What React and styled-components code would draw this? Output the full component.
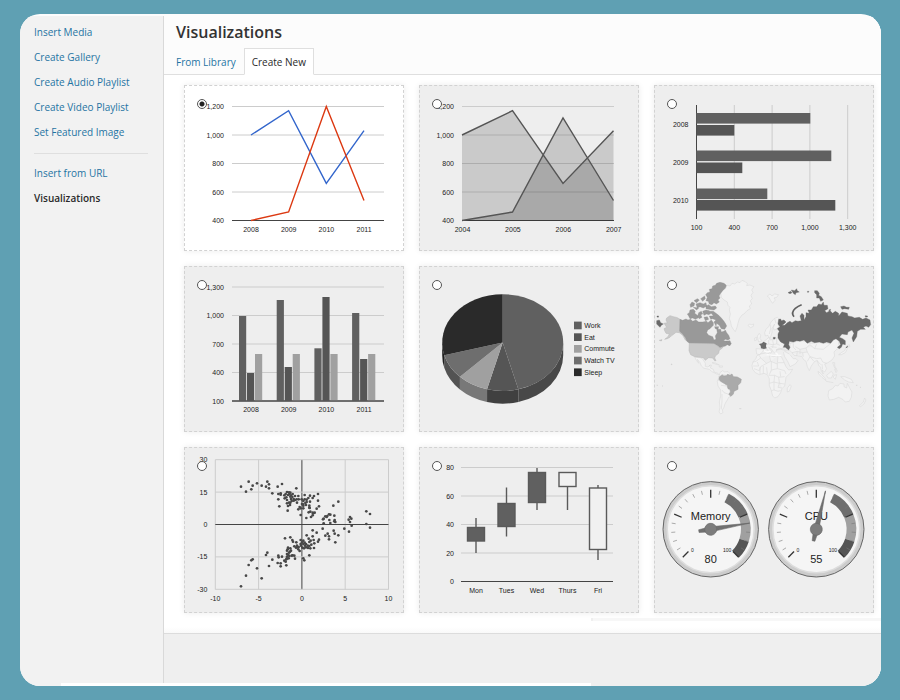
import React, { useState } from "react";
import styled, { createGlobalStyle } from "styled-components";

const Global = createGlobalStyle`
  *, *::before, *::after { box-sizing: border-box; }
  html { background: #5fa0b3; }
  body { margin: 0; font-family: "Open Sans", "Noto Sans", sans-serif; font-size: 10px; color: #333; }
  ul { list-style: none; margin: 0; padding: 0; }
`;

const Page = styled.div`
  min-height: 100vh;
  padding: 14px 19px 14px 20px;
  display: flex;
`;

const Frame = styled.div`
  flex: 1;
  min-width: 0;
  display: flex;
  flex-direction: column;
  padding-top: 2px;
  background: #fcfcfc;
  border-radius: 20px;
  overflow: hidden;
`;

const Columns = styled.div`
  flex: 1;
  display: flex;
`;

const BottomEdge = styled.div`
  height: 3px;
  background: linear-gradient(to right, #f2f2f2 41px, #fff 41px, #fff calc(100% - 290px), #efefef calc(100% - 290px));
`;

const Sidebar = styled.nav`
  flex: none;
  width: 144px;
  padding: 4px 15px 0 14px;
  background: #f2f2f2;
  border-right: 1px solid #d9d9d9;
`;

const MenuItem = styled.li`
  line-height: 25px;
  white-space: nowrap;
`;

const MenuLink = styled.a`
  color: ${(p) => (p.$current ? "#2a2a2a" : "#1f74a3")};
  font-weight: ${(p) => (p.$current ? 600 : 400)};
  text-decoration: none;
`;

const MenuDivider = styled.hr`
  height: 1px;
  margin: 8px 0 7px;
  border: 0;
  background: #dfdfdf;
`;

const Main = styled.main`
  flex: 1;
  min-width: 0;
  display: flex;
  flex-direction: column;
  background: #fff;
`;

const Header = styled.header`
  padding: 4px 12px 0;
  background: #fcfcfc;
  border-bottom: 1px solid #dfdfdf;
`;

const Title = styled.h1`
  margin: 0 0 4px;
  font-size: 16px;
  line-height: 24px;
  font-weight: 600;
`;

const Tabs = styled.div`
  display: flex;
  margin: 0 0 -1px -8px;
`;

const Tab = styled.button`
  height: 27px;
  padding: 0 7px;
  border: 1px solid ${(p) => (p.$active ? "#dfdfdf" : "transparent")};
  border-bottom-color: ${(p) => (p.$active ? "#fff" : "transparent")};
  background: ${(p) => (p.$active ? "#fff" : "transparent")};
  color: ${(p) => (p.$active ? "#2a2a2a" : "#1f74a3")};
  font: inherit;
  white-space: nowrap;
  cursor: pointer;
`;

const Gallery = styled.div`
  display: grid;
  grid-template-columns: repeat(3, 1fr);
  gap: 15px;
  padding: 10px 7px 5px 20px;
`;

const Card = styled.label`
  position: relative;
  display: block;
  border: 1px dashed #d2d2d2;
  background: ${(p) => (p.$selected ? "#fff" : "#eee")};
  box-shadow: 0 0 6px rgba(0, 0, 0, 0.08);
  cursor: pointer;
`;

const Radio = styled.input`
  appearance: none;
  position: absolute;
  top: 13px;
  left: 12px;
  width: 10px;
  height: 10px;
  margin: 0;
  border: 1px solid #555;
  border-radius: 50%;
  background: #fff;
  &:checked { background: radial-gradient(circle, #222 2px, #fff 3px); }
`;

const Chart = styled.svg`
  display: block;
  width: 100%;
  height: auto;
  font-family: "Liberation Sans", Arial, sans-serif;
`;

const AxisText = styled.text`
  font-size: 7px;
  fill: #222;
  text-anchor: ${(p) => p.$anchor || "middle"};
`;

const GaugeText = styled.text`
  font-size: ${(p) => p.$size}px;
  fill: #222;
  text-anchor: middle;
`;

const Rule = styled.div`
  width: 290px;
  height: 3px;
  align-self: flex-end;
  background: #f7f7f7;
  border-left: 2px solid #efefef;
`;

const Spacer = styled.div`
  height: 12px;
  background: linear-gradient(#fff 6px, #f9f9f9);
`;

const Footer = styled.footer`
  flex: 1;
  min-height: 40px;
  border-top: 1px solid #dcdcdc;
  background: #efefef;
`;

const Plot = ({ children, title }) => (
  <Chart viewBox="1 1 218 164" role="img" aria-label={title}>{children}</Chart>
);

const ROWS = [21.5, 50, 78.5, 107, 135.5];

function HGrid({ labels, x1, x2, dy = 0, right }) {
  return labels.map((l, i) => (
    <g key={l}>
      <line x1={x1} x2={x2} y1={ROWS[i] + dy} y2={ROWS[i] + dy} stroke={i === 4 ? "#444" : "#ccc"} />
      <AxisText x={right} y={ROWS[i] + dy + 2.5} $anchor="end">{l}</AxisText>
    </g>
  ));
}

const YEARS = ["2008", "2009", "2010", "2011"];

function LineChart() {
  return (
    <Plot title="Line chart">
      <HGrid labels={["1,200", "1,000", "800", "600", "400"]} x1={48} x2={200} right={40} />
      {YEARS.map((t, i) => <AxisText key={t} x={67 + i * 37.7} y={146.5}>{t}</AxisText>)}
      <g fill="none" strokeWidth="1.4">
        <path d="M67 50L104.6 25.7L142.3 98.4L180 45.7" stroke="#3366cc" />
        <path d="M67 135.5L104.6 127L142.3 21.5L180 115.5" stroke="#dc3912" />
      </g>
    </Plot>
  );
}

function AreaChart() {
  const a = "43 50L93.5 25.7L144 98.4L194.5 45.7";
  const b = "43 135.5L93.5 127L144 32.9L194.5 115.5";
  return (
    <Plot title="Area chart">
      <HGrid labels={["1,200", "1,000", "800", "600", "400"]} x1={43} x2={195} right={35} />
      {["2004", "2005", "2006", "2007"].map((t, i) => <AxisText key={t} x={43.5 + i * 50.4} y={146.5}>{t}</AxisText>)}
      <path d={`M43 135.5L${a}V135.5Z`} opacity="0.15" />
      <path d={`M${b}V135.5Z`} opacity="0.16" />
      <path d={`M${a}M${b}`} fill="none" stroke="#555" strokeWidth="1.4" />
    </Plot>
  );
}

function BarChart() {
  const bars = [[28, 114], [40, 38], [65.5, 135], [77.5, 46], [103.5, 71], [115, 139]];
  return (
    <Plot title="Bar chart">
      {["100", "400", "700", "1,000", "1,300"].map((t, i) => (
        <g key={t}>
          <line x1={42.5 + i * 37.8} x2={42.5 + i * 37.8} y1="20" y2="134" stroke={i ? "#ccc" : "#444"} />
          <AxisText x={42.5 + i * 37.8} y={145}>{t}</AxisText>
        </g>
      ))}
      {["2008", "2009", "2010"].map((t, i) => <AxisText key={t} x={34.5} y={41.5 + i * 38} $anchor="end">{t}</AxisText>)}
      {bars.map(([y, w], i) => <rect key={y} x="42.3" y={y} width={w} height="10.6" fill={i % 2 ? "#555" : "#606060"} />)}
    </Plot>
  );
}

function ColumnChart() {
  const tops = [[50, 107, 88], [34, 101, 88], [82.3, 31, 88], [47, 93, 88]];
  const fills = ["#606060", "#555", "#a0a0a0"];
  return (
    <Plot title="Column chart">
      <HGrid labels={["1,300", "1,000", "700", "400", "100"]} x1={48} x2={200} right={40} dy={-0.5} />
      {tops.map((g, i) => g.map((y, j) => (
        <rect key={`${i}-${j}`} x={55 + i * 37.7 + j * 8} y={y} width="7.2" height={134.7 - y} fill={fills[j]} />
      )))}
      <path d="M48 135H200" stroke="#444" />
      {YEARS.map((t, i) => <AxisText key={t} x={67 + i * 37.7} y={146}>{t}</AxisText>)}
    </Plot>
  );
}

const SLICES = [
  { name: "Work", from: 0, to: 165, top: "#606060", side: "#484848" },
  { name: "Eat", from: 165, to: 195, top: "#555", side: "#404040" },
  { name: "Commute", from: 195, to: 225, top: "#a0a0a0", side: "#787878" },
  { name: "Watch TV", from: 225, to: 255, top: "#6e6e6e", side: "#535353" },
  { name: "Sleep", from: 255, to: 360, top: "#2a2a2a", side: "#202020" },
];

function PieChart() {
  const pt = (deg) => {
    const r = (deg * Math.PI) / 180;
    return [83.7 + 60.5 * Math.sin(r), 76.6 - 48.4 * Math.cos(r)];
  };
  return (
    <Plot title="Pie chart">
      {SLICES.map((s) => {
        const [x1, y1] = pt(Math.max(s.from, 90));
        const [x2, y2] = pt(Math.min(s.to, 270));
        return <path key={s.name} fill={s.side} d={`M${x1} ${y1}A60.5 48.4 0 0 1 ${x2} ${y2}v12.6A60.5 48.4 0 0 0 ${x1} ${y1 + 12.6}Z`} />;
      })}
      {SLICES.map((s, i) => {
        const [x1, y1] = pt(s.from);
        const [x2, y2] = pt(s.to);
        return (
          <g key={s.name}>
            <path fill={s.top} d={`M83.7 76.6L${x1} ${y1}A60.5 48.4 0 0 1 ${x2} ${y2}Z`} />
            <rect x="155" y={55.6 + i * 11.7} width="7.7" height="7.7" fill={s.top} />
            <AxisText x={165.3} y={62 + i * 11.7} $anchor="start">{s.name}</AxisText>
          </g>
        );
      })}
    </Plot>
  );
}

const LAND = [
  // Greenland, Iceland, Svalbard
  "M212 98L218 90 226 86 232 76 240 78 246 70 254 72 262 66 270 68 276 61 286 65 292 71 290 77 300 75 312 80 305 90 309 97 303 106 307 116 301 122 305 132 298 138 301 146 291 152 282 162 276 165 268 176 264 190 261 202 256 215 250 208 244 198 242 186 238 176 241 162 238 150 240 142 234 136 232 126 222 120 214 112Z",
  "M294 197L298 192 305 194 311 192 310 199 302 203Z",
  "M352 108L360 102 366 108 374 102 386 104 380 112 372 114 376 120 368 130 362 122 358 114Z",
  // Mexico and Central America
  "M134 292L150 293 158 297 166 310 166 319 174 321 180 315 185 316 181 324 190 328 192 336 204 340 208 344 200 342 186 335 178 328 162 325 154 318 150 308 142 298 146 310 140 302Z",
  "M186 308L196 309 208 315 198 313ZM208 318L218 318 217 322 208 321Z",
  // South America
  "M210 338L218 332 224 336 234 335 240 341 232 346 220 344 210 351 212 364 224 370 232 382 240 392 238 402 244 408 236 412 232 420 228 426 224 434 222 442 217 450 219 458 212 462 207 456 210 442 208 426 212 408 212 390 204 378 202 364 206 354Z",
  "M205 350L216 352M204 360L212 364M213 376L228 378M216 390L222 398 234 402M216 402L216 424 214 448",
  // Scandinavia and western Europe
  "M346 228L344 218 348 208 356 200 362 188 372 176 382 172 388 178 384 188 386 200 380 208 372 210 370 202 374 192 366 206 366 218 360 236 354 226Z",
  "M374 176L378 190M362 194L362 206 358 222",
  "M322 228L328 220 332 226 330 236 336 242 326 246 324 238ZM314 234L320 232 320 240 314 242Z",
  "M318 266L334 267 342 268 336 278 328 284 320 282Z",
  "M342 244L350 238 356 232 360 240 372 238 382 234 392 242 402 252 404 260 394 266 386 264 380 270 376 280 370 276 364 266 356 262 366 276 360 280 350 266 344 264Z",
  "M356 240L356 252 350 254M356 252L368 254 380 252M368 240L370 252 368 264M380 236L380 252 390 256M362 260L380 262",
  // Africa
  "M320 288L332 282 346 279 356 280 358 286 370 290 384 286 394 290 400 302 408 320 416 330 428 328 420 340 408 352 406 366 404 378 396 386 392 398 384 410 374 414 368 408 364 392 358 376 358 356 352 344 342 340 328 344 316 338 308 328 306 316 310 304 318 296Z",
  "M328 286L332 294 318 304 308 306M332 294L350 310 362 304 358 286M350 310L332 320 328 332 312 326M362 304L382 312 384 286M384 308L402 308M382 312L382 326 364 330 358 344M364 304L364 330M340 318L340 340M322 306L326 318 310 318M382 326L404 332 408 342M356 346L374 346 386 352 404 350M374 346L372 366 358 370M372 366L388 370 404 372M386 352L388 370 384 382 396 384M372 366L372 390 364 392M372 390L384 394 392 392M350 322L352 342M390 334L392 350M330 322L330 342",
  "M412 384L420 374 424 378 418 394 412 396Z",
  // Middle East and south Asia
  "M378 270L392 268 408 272 418 270 426 278 432 286 446 288 456 290 460 298 468 304 472 320 478 332 484 318 494 304 502 302 506 316 512 322 514 334 520 342 516 330 524 336 530 326 524 312 534 308 546 300 554 288 552 276 560 268 568 264 576 258 566 254 566 240 552 236 540 250 508 248 480 250 450 240 430 248 420 250 420 264 406 268 392 266Z",
  "M400 276L404 290 414 306 420 320 436 312 444 302 438 296 430 296 420 284M402 272L418 282M426 278L442 274 458 278 460 290M436 260L450 268 468 264 472 276 458 278M442 274L440 288M468 264L480 254 494 266 520 268 540 252M472 276L480 290 500 296 512 294M480 290L472 304M430 250L430 262 438 270M494 266L500 252M512 294L518 306 530 310M500 300L512 314M450 268L450 282M480 290L492 304M516 312L518 328",
  // Japan, Philippines, Indonesia
  "M566 284L574 278 584 272 588 262 592 266 586 278 574 284ZM590 258L598 254 600 260 592 262Z",
  "M548 308L554 308 554 318 560 328 554 324ZM554 328L562 332 558 338Z",
  "M504 334L514 342 526 356 528 362 516 352 506 342ZM530 346L544 334 550 342 544 354 534 354ZM528 364L550 368M552 346L560 344 556 358 550 352ZM572 350L584 350 604 358 610 368 596 366 584 360Z",
  // Australia and New Zealand
  "M536 392L548 386 556 376 564 378 570 370 582 372 582 380 590 384 592 370 598 382 606 396 604 412 598 424 586 426 578 418 566 412 552 418 538 420 534 408Z",
  "M628 438L640 426 644 414 648 420 642 432 632 440Z",
];

const CANADA = "M90 178L98 181 108 177 114 180 122 178 128 184 138 180 146 186 158 186 170 184 174 188 184 180 190 188 190 196 184 202 180 206 173 210 170 218 176 226 188 230 192 240 198 238 196 228 202 218 200 206 206 208 212 208 214 216 222 214 226 210 230 218 236 226 240 236 234 240 226 238 220 242 232 244 236 248 242 252 240 257 232 254 226 258 218 260 210 264 204 258 192 252 118 250 111 244 107 234 98 222 89 214Z";
const ARCTIC = [
  "M200 70L210 67 222 70 229 76 226 84 218 92 212 100 207 108 210 114 204 120 208 126 199 132 192 128 186 134 178 132 175 124 168 122 172 112 167 104 172 98 180 96 178 88 186 86 188 78 196 76Z",
  "M120 150L130 148 136 154 134 160 142 166 144 174 136 178 128 174 120 176 116 168 112 162 118 158Z",
  "M146 158L154 154 158 162 152 164 156 172 148 176 142 170ZM158 154L168 150 178 152 184 160 176 164 170 162 162 166ZM180 154L190 154 198 160 206 166 214 174 222 184 226 190 230 198 224 208 214 206 208 196 200 190 198 198 192 186 198 180 188 176 182 178 178 168 190 168Z",
  "M162 172L172 170 176 178 166 182ZM194 200L206 200 204 208 196 206Z",
  "M120 134L126 126 134 130 132 138 122 142ZM132 122L142 116 148 120 140 128ZM138 132L150 128 160 132 168 128 170 138 160 144 150 140 142 144ZM152 116L164 108 166 116 158 124ZM168 138L176 134 184 140 196 138 200 144 192 150 176 148 168 146ZM130 142L146 144 140 150Z",
  "M228 244L240 242 244 252 236 256Z",
];
const RUSSIA = "M386 178L392 177 394 182 402 180 408 186 402 192 396 196 404 196 412 188 420 184 426 188 436 182 444 184 454 182 450 168 456 160 462 166 462 180 468 170 468 158 478 160 474 150 484 150 490 140 500 140 506 132 514 134 520 126 522 136 532 136 534 146 524 152 530 158 540 152 548 160 556 154 566 160 566 168 576 156 592 160 594 168 606 170 614 174 628 172 638 178 648 174 660 180 662 194 656 202 648 198 640 202 646 208 632 208 622 214 620 230 610 246 606 234 612 220 606 210 594 216 592 224 576 222 568 232 578 236 586 242 586 254 578 252 574 262 568 266 562 262 572 254 568 244 558 236 550 240 542 250 530 246 520 250 508 246 494 248 484 244 472 250 462 240 450 244 440 242 430 246 418 244 416 254 420 262 416 270 406 262 400 262 404 252 392 246 384 234 384 222 388 214 382 206 390 200 384 192Z";
const RUSSIAN_ISLES = "M414 98L422 94 426 98 420 101ZM424 90L434 92 440 86 442 92 448 96 438 98 436 104 430 100ZM472 94L477 94 474 98ZM494 92L502 92 508 100 506 106 514 110 520 120 512 124 508 114 500 114 500 104 494 98ZM572 140L582 138 590 142 598 142 596 148 584 146 576 148ZM646 167L653 168 652 171 646 171ZM20 182L28 180 32 188 40 192 34 196 30 202 20 192ZM370 232L376 232 375 237 370 237ZM588 262L594 258 590 264ZM21 168L26 168 25 172 21 171ZM536 150L542 148 540 154Z";

function GeoChart() {
  return (
    <Plot title="Geo chart">
      <g transform="translate(-4 -6) scale(0.3333)" strokeLinejoin="round">
        <path d={LAND.join("")} fill="#f2f2f2" stroke="#dadada" strokeWidth="1.8" />
        <path d="M342 272L350 276 362 274M350 284L370 286 394 286M376 278L384 284" fill="none" stroke="#fafafa" strokeWidth="4" />
        <path d="M64 312h2v2h-2ZM178 318h3M618 376h4M630 382h3M268 446h6M20 376h4M36 378h3" fill="none" stroke="#ccc" strokeWidth="2" />
        <path d="M60 167L70 170 82 173 90 178 90 214 98 220 106 232 112 244 106 240 98 226 88 218 78 217 72 222 66 226 60 232 52 236 44 238 54 230 58 222 48 220 44 212 42 206 50 202 46 196 42 190 52 188 48 180 50 174ZM28 241L36 239 34 243Z" fill="#c9c9c9" stroke="#b6b6b6" strokeWidth="1.5" />
        <path d={CANADA + ARCTIC.join("")} fill="#999" stroke="#8c8c8c" strokeWidth="1" />
        <path d="M118 250L192 251 204 259 210 264 220 260 214 267 208 270 206 280 196 288 194 294 198 302 194 302 188 294 176 293 166 301 160 293 150 292 134 290 122 284 117 272Z" fill="#cacaca" stroke="#b6b6b6" strokeWidth="1.5" />
        <path d="M209 350L217 344 221 348 230 347 232 343 240 346 246 342 250 350 262 351 274 358 272 368 264 376 264 388 252 394 250 402 243 409 236 403 242 396 240 388 234 386 232 376 222 370 212 364 207 358Z" fill="#aaa" stroke="#999" strokeWidth="1.5" />
        <path d={RUSSIA + RUSSIAN_ISLES} fill="#696969" stroke="#606060" strokeWidth="1" />
        <path d="M432 170Q422 158 436 145Q444 138 455 134" fill="none" stroke="#606060" strokeWidth="5" />
        <path d="M327 252L336 250 340 245 350 250 348 258 350 265 342 267 333 265 332 257Z" fill="#6c6c6c" />
      </g>
    </Plot>
  );
}

const POINTS = [
  // upper cluster
  183,140, 198,155, 206,125, 214,148, 218,137, 231,130, 245,137, 258,140, 262,125, 267,133, 267,145, 277,160, 293,140, 306,132, 349,145, 295,162, 302,160, 295,178, 298,199, 302,164, 313,166, 317,162, 321,156, 327,157, 323,212, 321,180, 319,172, 324,165, 328,162, 331,170, 333,177, 327,188, 321,190, 331,188, 335,183, 337,171, 341,177, 345,168, 331,158, 345,180, 350,178, 351,188, 356,178, 324,198, 330,195, 314,175, 355,168, 355,208, 359,201, 362,225, 362,205, 370,205, 369,193, 370,183, 374,165, 374,178, 376,189, 378,195, 380,179, 370,197, 385,174, 390,167, 390,185, 388,197, 389,204, 398,174, 402,168, 414,162, 414,182, 410,206, 417,199, 386,217, 391,215, 398,218, 404,218, 398,226, 393,231, 379,234, 338,162, 341,182, 365,178, 380,186, 333,166, 366,192, 388,203, 400,220,
  // right tail
  460,197, 475,185, 559,214, 570,222, 436,229, 442,228, 447,223, 451,224, 463,227, 429,238, 431,250, 448,240, 451,249, 464,240, 466,246, 510,231, 514,236, 506,239, 510,246, 515,257, 559,252, 570,263, 493,266, 507,275, 475,286, 428,266, 461,272, 464,281, 443,281, 436,287, 447,289, 447,298, 466,307, 398,271, 410,278, 463,244, 431,236, 440,231,
  // lower cluster
  183,439, 198,407, 206,375, 214,361, 218,358, 231,385, 245,415, 258,345, 262,338, 267,378, 277,359, 293,369, 302,370, 302,379, 295,347, 306,350, 296,352, 313,362, 319,376, 319,358, 321,350, 321,342, 321,332, 324,323, 331,325, 333,332, 327,338, 328,348, 335,347, 343,347, 345,356, 320,356, 326,355, 338,346, 315,295, 331,292, 337,300, 339,305, 349,307, 343,319, 348,323, 351,317, 355,328, 359,333, 356,321, 362,300, 362,312, 367,323, 370,312, 370,302, 374,308, 378,312, 378,322, 372,325, 380,286, 386,296, 388,306, 392,302, 394,314, 388,318, 391,325, 402,324, 403,310, 398,289, 401,300, 414,305, 417,299, 388,346, 370,355, 373,361, 363,317, 383,317, 353,322, 375,317, 323,328, 330,335, 325,345, 317,365, 384,324, 366,307,
];

function ScatterChart() {
  const pts = [];
  for (let i = 0; i < POINTS.length; i += 2) pts.push([POINTS[i] / 3 - 4, POINTS[i + 1] / 3 - 7]);
  return (
    <Plot title="Scatter chart">
      {["-10", "-5", "0", "5", "10"].map((t, i) => {
        const x = 31.3 + i * 43.3;
        return (
          <g key={t}>
            <line x1={x} x2={x} y1="12.7" y2="142.5" stroke={i === 2 ? "#444" : "#ccc"} />
            <AxisText x={x} y={154}>{t}</AxisText>
          </g>
        );
      })}
      {["30", "15", "0", "-15", "-30"].map((t, i) => {
        const y = 12.7 + i * 32.4;
        return (
          <g key={t}>
            <line x1="31.3" x2="204.5" y1={y} y2={y} stroke={i === 2 ? "#444" : "#ccc"} />
            <AxisText x={23.3} y={y + 2.5} $anchor="end">{t}</AxisText>
          </g>
        );
      })}
      {pts.map(([x, y], i) => <circle key={i} cx={x} cy={y} r="1.35" fill="#484848" />)}
    </Plot>
  );
}

const CANDLES = [
  { day: "Mon", x: 57, open: 80.5, close: 94, high: 71, low: 106 },
  { day: "Tues", x: 87.5, open: 56.5, close: 79.5, high: 40.5, low: 89.5 },
  { day: "Wed", x: 118, open: 25.5, close: 55.5, high: 21, low: 63 },
  { day: "Thurs", x: 148.5, open: 25.5, close: 39.5, high: 25.5, low: 63, hollow: true },
  { day: "Fri", x: 179, open: 41, close: 102.5, high: 38, low: 113, hollow: true },
];

function CandlestickChart() {
  return (
    <Plot title="Candlestick chart">
      <HGrid labels={["80", "60", "40", "20", "0"]} x1={42} x2={194} right={35} dy={-1} />
      {CANDLES.map((c) => (
        <g key={c.day} stroke="#5a5a5a" strokeWidth="1.4">
          <line x1={c.x} x2={c.x} y1={c.high} y2={c.low} />
          <rect x={c.x - 8.5} y={c.open} width="17" height={c.close - c.open} fill={c.hollow ? "#f1f1f1" : "#606060"} />
        </g>
      ))}
      {CANDLES.map((c) => <AxisText key={c.day} x={c.x} y={146}>{c.day}</AxisText>)}
    </Plot>
  );
}

const polar = (r, deg) => {
  const a = (deg * Math.PI) / 180;
  return `${(r * Math.sin(a)).toFixed(2)} ${(-r * Math.cos(a)).toFixed(2)}`;
};

const band = (from, to) =>
  `M${polar(40, from)}A40 40 0 0 1 ${polar(40, to)}L${polar(30.3, to)}A30.3 30.3 0 0 0 ${polar(30.3, from)}Z`;

function Gauge({ cx, name, value }) {
  const ticks = Array.from({ length: 21 }, (_, i) => i);
  return (
    <g transform={`translate(${cx} 82.3)`}>
      <circle r="47.7" fill="#ccc" stroke="#666" strokeWidth="1" />
      <circle r="43.5" fill="#f5f5f5" stroke="#ddd" strokeWidth="1.6" />
      <path d={band(27, 67.5)} fill="#6e6e6e" />
      <path d={band(67.5, 108)} fill="#a0a0a0" />
      <path d={band(108, 135)} fill="#555" />
      {ticks.map((i) => {
        const major = i % 5 === 0;
        const deg = -135 + i * 13.5;
        return (
          <path
            key={i}
            d={`M${polar(major ? 31.5 : 35.5, deg)}L${polar(39.5, deg)}`}
            stroke={major ? "#333" : "#777"}
            strokeWidth={major ? 1.3 : 0.6}
          />
        );
      })}
      <GaugeText $size={11} y="-9.5">{name}</GaugeText>
      <GaugeText $size={11} y="33.5">{value}</GaugeText>
      <GaugeText $size={5} x="-18.3" y="23">0</GaugeText>
      <GaugeText $size={5} x="16.5" y="23">100</GaugeText>
      <g transform={`rotate(${(value - 50) * 2.7})`}>
        <path d="M0 -39.5L2.6 0L1.4 12L-1.4 12L-2.6 0Z" fill="#707070" stroke="#666" strokeWidth="0.5" />
        <circle r="6" fill="#7c7c7c" stroke="#666" strokeWidth="0.6" />
      </g>
    </g>
  );
}

function GaugeChart() {
  return (
    <Plot title="Gauge chart">
      <Gauge cx={56.7} name="Memory" value={80} />
      <Gauge cx={162.3} name="CPU" value={55} />
    </Plot>
  );
}

const CHARTS = [
  ["line", LineChart], ["area", AreaChart], ["bar", BarChart],
  ["column", ColumnChart], ["pie", PieChart], ["geo", GeoChart],
  ["scatter", ScatterChart], ["candlestick", CandlestickChart], ["gauge", GaugeChart],
];

const MEDIA = ["Insert Media", "Create Gallery", "Create Audio Playlist", "Create Video Playlist", "Set Featured Image"];

export default function App() {
  const [type, setType] = useState("line");
  return (
    <Page>
      <Global />
      <Frame>
        <Columns>
          <Sidebar>
            <ul>
              {MEDIA.map((m) => <MenuItem key={m}><MenuLink href="#">{m}</MenuLink></MenuItem>)}
            </ul>
            <MenuDivider />
            <ul>
              <MenuItem><MenuLink href="#">Insert from URL</MenuLink></MenuItem>
              <MenuItem><MenuLink href="#" $current aria-current="page">Visualizations</MenuLink></MenuItem>
            </ul>
          </Sidebar>
          <Main>
            <Header>
              <Title>Visualizations</Title>
              <Tabs role="tablist">
                <Tab role="tab" aria-selected="false">From Library</Tab>
                <Tab role="tab" aria-selected="true" $active>Create New</Tab>
              </Tabs>
            </Header>
            <Gallery>
              {CHARTS.map(([id, Picture]) => (
                <Card key={id} $selected={type === id}>
                  <Picture />
                  <Radio type="radio" name="chart" value={id} checked={type === id} onChange={() => setType(id)} />
                </Card>
              ))}
            </Gallery>
            <Rule />
            <Spacer />
            <Footer />
          </Main>
        </Columns>
        <BottomEdge />
      </Frame>
    </Page>
  );
}
